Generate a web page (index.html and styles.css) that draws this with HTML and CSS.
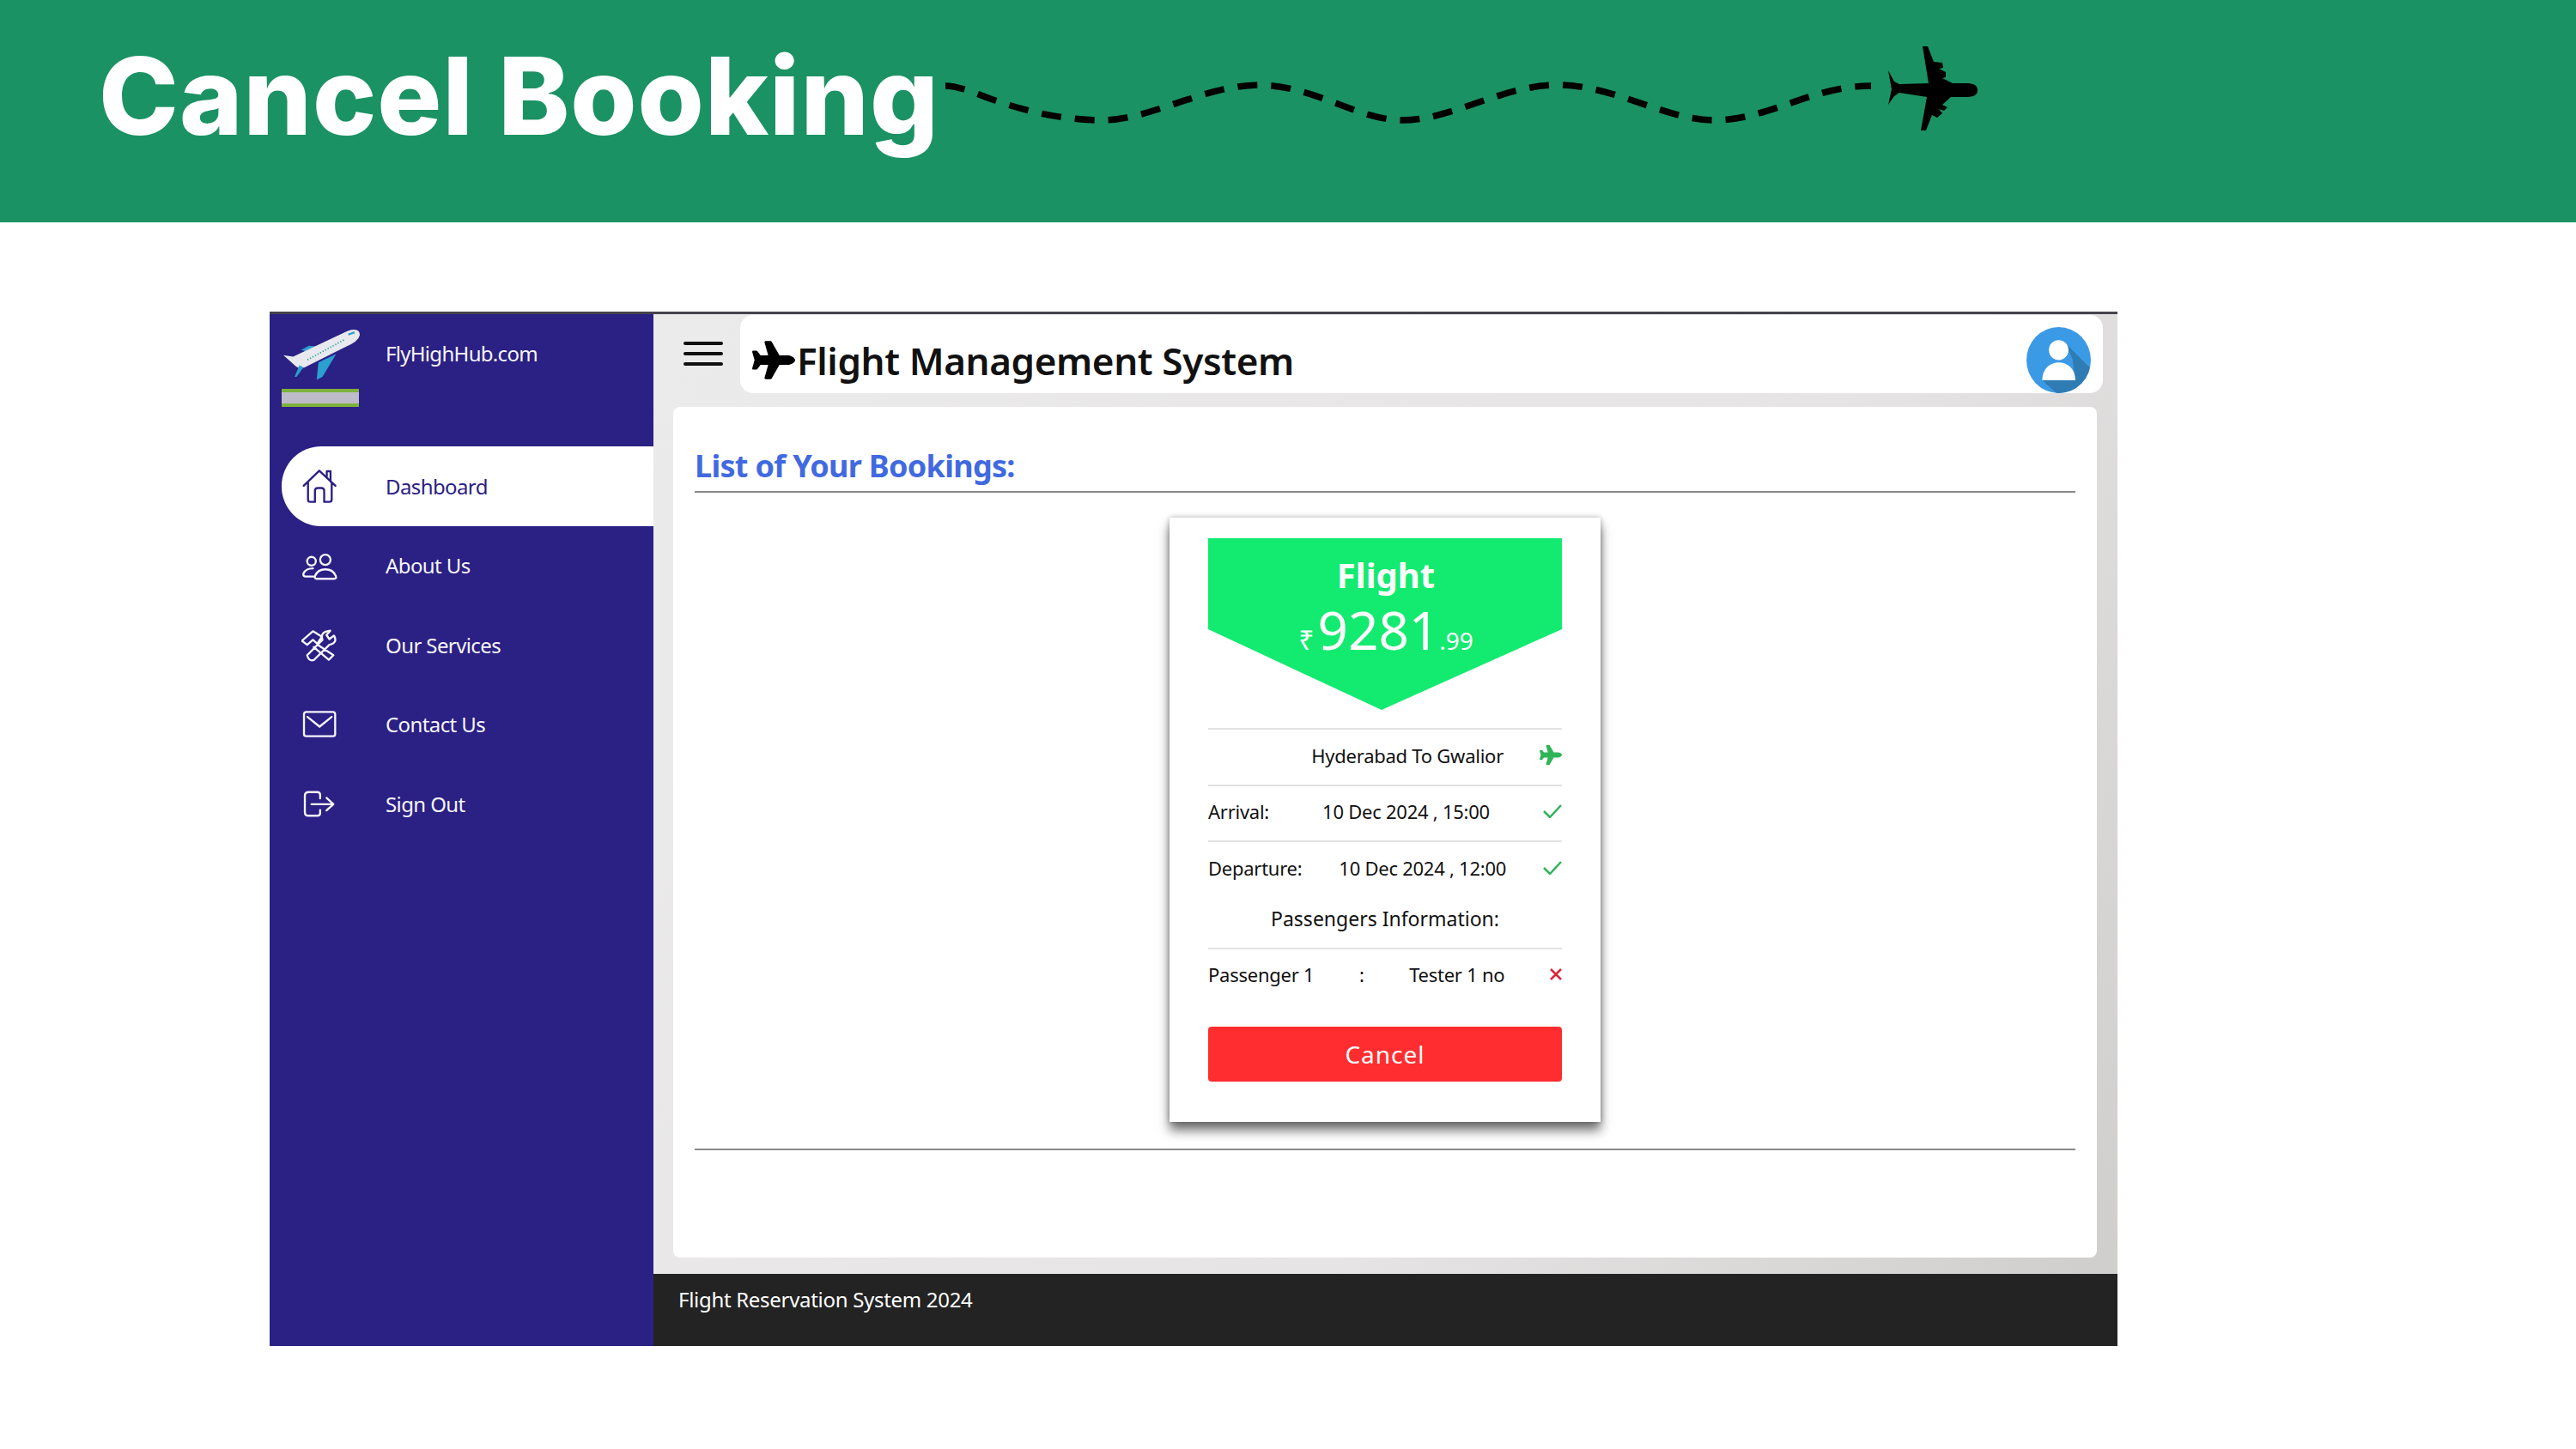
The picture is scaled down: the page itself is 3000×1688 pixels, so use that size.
FILE: index.html
```html
<!DOCTYPE html>
<html lang="en">
<head>
    <meta charset="UTF-8">
    <title>Cancel Booking</title>
    <link rel="stylesheet" href="styles.css">
</head>
<body>
    <header class="banner">
        <h1>Cancel Booking</h1>
        <svg class="route" viewBox="1100 50 1210 105" width="1210" height="105">
            <path class="route-line" d="M1101 100 C1110 100 1125 104 1140 110 C1190 130 1240 140 1283 140 C1340 140 1400 100 1466 99 C1530 99 1580 140 1634 140 C1690 140 1750 99 1814 99 C1880 99 1940 140 1996 140 C2060 140 2110 100 2179 100"/>
            <path d="M2303 105 C2303 111 2298 113 2290 113 L2272 113 L2262 122 L2268 125 L2264 129 L2258 127 L2262 132 L2256 137 L2250 134 L2243 152 L2237 152 L2244 113 L2212 108 L2206 112 L2199 122 L2203 104 L2199 82 L2206 95 L2212 98 L2246 97 L2239 54 L2245 54 L2252 72 L2262 73 L2263 79 L2258 80 L2266 84 L2266 90 L2262 91 L2274 97 L2290 97 C2298 97 2303 99 2303 105 Z"/>
        </svg>
    </header>

    <div class="app">
        <aside class="sidebar">
            <div class="brand">
                <div class="brand-logo">
                    <svg viewBox="50 75 275 185" width="92" height="62">
                        <path fill="#2a9fd0" d="M118 152 L145 137 L178 140 L150 160 Z"/>
                        <path fill="#e8e9ee" d="M56 170 L90 175 L280 85 Q322 72 322 100 Q318 122 270 142 L130 212 Q108 220 92 202 Z"/>
                        <path fill="#2a9fd0" d="M178 195 L240 165 L192 245 L172 256 Z"/>
                        <path fill="#2a9fd0" d="M112 205 L126 212 L102 245 L95 245 Z"/>
                        <path fill="none" stroke="#2a9fa0" stroke-width="5" stroke-dasharray="4 6" d="M140 186 L268 116"/>
                        <path fill="none" stroke="#2a9fd0" stroke-width="7" d="M282 98 L304 90"/>
                    </svg>
                    <div class="brand-stripe"></div>
                </div>
                <span class="brand-name">FlyHighHub.com</span>
            </div>
            <ul class="nav">
                <li class="nav-item active">
                    <svg class="nav-icon" viewBox="125 573 125 122"><path d="M133 632 L187 580 L243 632 M148 620 V680 Q148 688 156 688 H172 V650 Q172 640 182 640 H194 Q204 640 204 650 V688 H222 Q230 688 230 680 V620 M213 600 V582 H226 V618"/></svg>
                    <span>Dashboard</span>
                </li>
                <li class="nav-item">
                    <svg class="nav-icon" viewBox="125 50 125 122"><circle cx="160" cy="97" r="15"/><circle cx="208" cy="92" r="18"/><path d="M166 150 H140 Q130 150 132 140 Q140 122 165 122 M178 158 H238 Q248 158 244 148 Q235 125 208 125 Q182 125 172 148 Q170 158 178 158 Z"/></svg>
                    <span>About Us</span>
                </li>
                <li class="nav-item">
                    <svg class="nav-icon" viewBox="125 332 125 122"><path d="M127 378 L165 345 L196 364 L180 388 L165 375 L145 392 Z M182 392 L236 428 L220 444 L168 400 M145 428 L198 375 Q190 350 215 345 L225 343 L212 358 L222 372 L238 360 Q252 385 222 392 L168 445 Q150 450 145 428 Z"/></svg>
                    <span>Our Services</span>
                </li>
                <li class="nav-item">
                    <svg class="nav-icon" viewBox="125 610 125 122"><rect x="134" y="629" width="108" height="84" rx="8"/><path d="M146 646 L188 680 L230 646"/></svg>
                    <span>Contact Us</span>
                </li>
                <li class="nav-item">
                    <svg class="nav-icon" viewBox="125 888 125 122"><path d="M190 930 V918 Q190 908 180 908 H150 Q137 908 137 921 V978 Q137 990 150 990 H180 Q190 990 190 980 V970 M160 950 H235 M212 928 L236 950 L212 972"/></svg>
                    <span>Sign Out</span>
                </li>
            </ul>
        </aside>

        <div class="content">
            <div class="top-row">
                <div class="hamburger"><span></span><span></span><span></span></div>
                <div class="topbar">
                    <svg class="plane-icon" viewBox="0 0 576 512" width="50" height="45"><path d="M480 192H365.71L260.61 8.06A16.014 16.014 0 0 0 246.71 0h-65.5c-10.63 0-18.3 10.17-15.38 20.39L214.86 192H112l-43.2-57.6c-3.02-4.03-7.77-6.4-12.8-6.4H16.01C5.6 128-2.04 137.78.49 147.88L32 256 .49 364.12C-2.04 374.22 5.6 384 16.01 384H56c5.04 0 9.78-2.37 12.8-6.4L112 320h102.86l-49.03 171.6c-2.92 10.22 4.75 20.4 15.38 20.4h65.5c5.74 0 11.04-3.08 13.89-8.06L365.71 320H480c35.35 0 96-28.65 96-64s-60.65-64-96-64z"/></svg>
                    <span class="topbar-title">Flight Management System</span>
                    <svg class="avatar" viewBox="480 82 224 224" width="75" height="77" preserveAspectRatio="none">
                        <defs><clipPath id="avatar-clip"><circle cx="592" cy="194" r="112"/></clipPath></defs>
                        <circle cx="592" cy="194" r="112" fill="#3b9ae6"/>
                        <path clip-path="url(#avatar-clip)" fill="#2f7cb5" d="M615 135 L720 240 L720 320 L600 320 L535 262 L650 262 L640 190 Z"/>
                        <circle cx="592" cy="160" r="34" fill="#fff"/>
                        <path fill="#fff" d="M535 262 C535 225 560 202 592 202 C625 202 650 225 650 262 Z"/>
                    </svg>
                </div>
            </div>

            <main class="panel">
                <h2>List of Your Bookings:</h2>
                <hr>
                <div class="card">
                    <div class="price-tag">
                        <div class="price-title">Flight</div>
                        <div class="price"><span class="currency">₹</span>9281<span class="cents">.99</span></div>
                    </div>
                    <div class="row route-row">
                        <span>Hyderabad To Gwalior</span>
                        <svg class="plane-icon green" viewBox="0 0 576 512" width="26" height="25"><path d="M480 192H365.71L260.61 8.06A16.014 16.014 0 0 0 246.71 0h-65.5c-10.63 0-18.3 10.17-15.38 20.39L214.86 192H112l-43.2-57.6c-3.02-4.03-7.77-6.4-12.8-6.4H16.01C5.6 128-2.04 137.78.49 147.88L32 256 .49 364.12C-2.04 374.22 5.6 384 16.01 384H56c5.04 0 9.78-2.37 12.8-6.4L112 320h102.86l-49.03 171.6c-2.92 10.22 4.75 20.4 15.38 20.4h65.5c5.74 0 11.04-3.08 13.89-8.06L365.71 320H480c35.35 0 96-28.65 96-64s-60.65-64-96-64z"/></svg>
                    </div>
                    <div class="row">
                        <span>Arrival:</span>
                        <span>10 Dec 2024 , 15:00</span>
                        <svg class="mark check" viewBox="0 0 22 16" width="22" height="16"><path d="M1 8 L8 15 L21 1"/></svg>
                    </div>
                    <div class="row">
                        <span>Departure:</span>
                        <span>10 Dec 2024 , 12:00</span>
                        <svg class="mark check" viewBox="0 0 22 16" width="22" height="16"><path d="M1 8 L8 15 L21 1"/></svg>
                    </div>
                    <div class="info-title">Passengers Information:</div>
                    <div class="row">
                        <span>Passenger 1</span>
                        <span>:</span>
                        <span>Tester 1 no</span>
                        <svg class="mark cross" viewBox="0 0 14 14" width="14" height="14"><path d="M1 1 L13 13 M13 1 L1 13"/></svg>
                    </div>
                    <button class="cancel-btn">Cancel</button>
                </div>
                <hr class="hr-bottom">
            </main>

            <footer class="footer">Flight Reservation System 2024</footer>
        </div>
    </div>
</body>
</html>
```

FILE: styles.css
```css
body {
    margin: 0;
    background-color: #fff;
    font-family: "Noto Sans", sans-serif;
    color: #111;
}

/* green title banner */
.banner {
    height: 259px;
    background-color: #1b9263;
    display: flex;
    align-items: flex-start;
    padding-left: 115px;
}
.banner h1 {
    margin: 37px 0 0;
    width: 985px;
    font-family: Inter, sans-serif;
    font-size: 125px;
    font-weight: 800;
    line-height: 150px;
    letter-spacing: 1px;
    color: #fff;
    white-space: nowrap;
}
.route {
    margin-top: 50px;
    display: block;
}
.route-line {
    fill: none;
    stroke: #000;
    stroke-width: 7.5;
    stroke-dasharray: 23 16;
}

/* app screenshot */
.app {
    margin: 104px 0 0 314px;
    width: 2152px;
    height: 1205px;
    display: flex;
    box-sizing: border-box;
    border-top: 3px solid #45434a;
}
.sidebar {
    width: 447px;
    background-color: #2b2084;
    color: #f5f5fa;
}
.brand {
    height: 154px;
    box-sizing: border-box;
    padding: 16px 0 0 14px;
    display: flex;
    gap: 29px;
}
.brand-logo svg {
    display: block;
}
.brand-stripe {
    margin-top: 9px;
    width: 90px;
    height: 13px;
    background-color: #bdbcc8;
    border-top: 4px solid #7fb23c;
    border-bottom: 4px solid #7fb23c;
}
.brand-name {
    font-size: 24px;
    line-height: 33px;
    margin-top: 13px;
    letter-spacing: -0.7px;
}
.nav {
    list-style: none;
    margin: 0 0 0 14px;
    padding: 0;
}
.nav-item {
    height: 92.5px;
    display: flex;
    align-items: center;
    font-size: 24px;
    letter-spacing: -0.6px;
    border-radius: 46px 0 0 46px;
}
.nav-item.active {
    background-color: #fff;
    color: #2b2084;
}
.nav-icon {
    width: 42px;
    height: 41px;
    margin: 0 56px 0 23px;
    fill: none;
    stroke: currentColor;
    stroke-width: 7;
    stroke-linecap: round;
    stroke-linejoin: round;
}

.content {
    flex: 1;
    display: flex;
    flex-direction: column;
    background: linear-gradient(120deg, #ecebeb 0%, #e6e4e4 60%, #cfcccc 100%);
}
.top-row {
    display: flex;
    padding-top: 1px;
    padding-right: 17px;
}
.hamburger {
    width: 101px;
    box-sizing: border-box;
    padding: 31px 0 0 35px;
}
.hamburger span {
    display: block;
    width: 46px;
    height: 4px;
    margin-bottom: 8px;
    background-color: #111;
    border-radius: 2px;
}
.topbar {
    flex: 1;
    height: 91px;
    box-sizing: border-box;
    background-color: #fff;
    border-radius: 15px;
    display: flex;
    align-items: flex-start;
    padding: 30px 14px 0;
}
.plane-icon {
    flex: none;
}
.plane-icon.green {
    fill: #2fb457;
}
.topbar-title {
    margin: -7px 0 0 2px;
    font-size: 44px;
    line-height: 60px;
    font-weight: 600;
    letter-spacing: -0.4px;
    color: #111;
}
.avatar {
    margin-left: auto;
    margin-top: -16px;
}
.panel {
    margin: 16px 24px 0 23px;
    height: 991px;
    box-sizing: border-box;
    background-color: #fff;
    border-radius: 8px;
    padding: 43px 25px 0;
}
.panel h2 {
    margin: 0;
    height: 55px;
    font-size: 36px;
    line-height: 52px;
    font-weight: 700;
    letter-spacing: -0.7px;
    color: #4169e1;
}
.panel hr {
    margin: 0;
    border: 0;
    height: 2px;
    background-color: #8a8a8a;
}
.panel .hr-bottom {
    margin-top: 31px;
}

/* booking card */
.card {
    width: 502px;
    box-sizing: border-box;
    margin: 29px auto 0;
    padding: 24px 45px 47px;
    background-color: #fff;
    box-shadow: 0 10px 12px rgba(0, 0, 0, 0.55), 0 0 6px rgba(0, 0, 0, 0.3);
}
.price-tag {
    height: 200px;
    background-color: #13eb70;
    color: #fff;
    text-align: center;
    padding-left: 2px;
    clip-path: polygon(0 0, 100% 0, 100% 106px, 49% 100%, 0 106px);
}
.price-title {
    padding-top: 16px;
    font-size: 40px;
    line-height: 54px;
    font-weight: 700;
}
.price {
    font-size: 62px;
    line-height: 76px;
    margin-top: -2px;
}
.currency {
    font-size: 32px;
    margin-right: 4px;
}
.cents {
    font-size: 28px;
    margin-left: 0;
}
.row {
    height: 65.5px;
    box-sizing: border-box;
    display: flex;
    justify-content: space-between;
    align-items: center;
    padding-bottom: 4px;
    font-size: 22px;
    letter-spacing: -0.25px;
    border-top: 2px solid #e2e2e2;
}
.route-row {
    margin-top: 21px;
    justify-content: flex-end;
    gap: 42px;
}
.row .mark {
    fill: none;
    stroke-width: 2.5;
}
.row .check {
    stroke: #2fb457;
}
.row .cross {
    stroke: #d9263c;
}
.info-title {
    height: 59px;
    padding-top: 1px;
    box-sizing: border-box;
    text-align: center;
    font-size: 23px;
    line-height: 48px;
}
.cancel-btn {
    display: block;
    width: 100%;
    height: 64px;
    margin-top: 27px;
    border: 0;
    border-radius: 4px;
    background-color: #ff2d2f;
    color: #fff;
    font-family: "Noto Sans", sans-serif;
    font-size: 28px;
    letter-spacing: 1px;
}

.footer {
    margin-top: 19px;
    height: 84px;
    box-sizing: border-box;
    background-color: #232323;
    color: #fff;
    font-size: 24px;
    letter-spacing: -0.3px;
    line-height: 32px;
    padding: 14px 0 0 29px;
}
```
